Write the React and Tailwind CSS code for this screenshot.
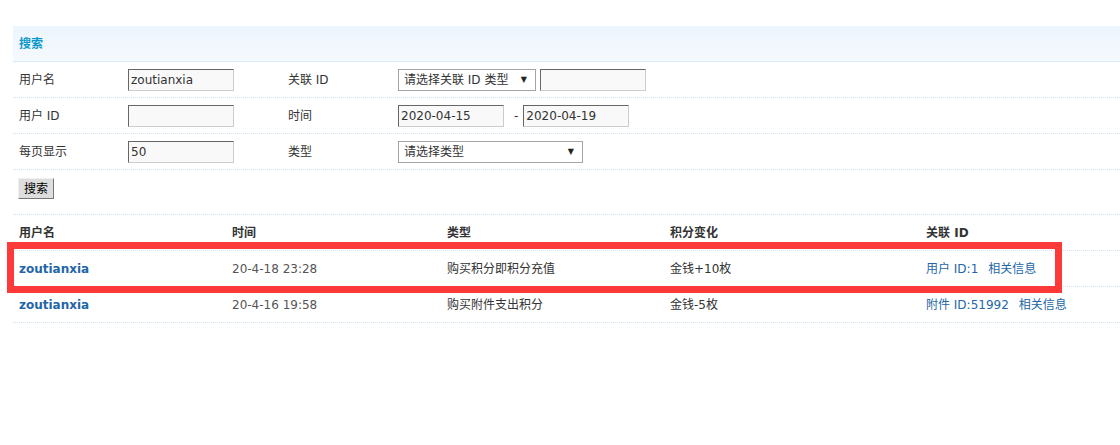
import { useState } from 'react'

const FONT = "font-['DejaVu_Sans','Noto_Sans_CJK_SC',sans-serif]"

const ROWS = [
  { user: 'zoutianxia', time: '20-4-18 23:28', type: '购买积分即积分充值', change: '金钱+10枚', rel: '用户 ID:1' },
  { user: 'zoutianxia', time: '20-4-16 19:58', type: '购买附件支出积分', change: '金钱-5枚', rel: '附件 ID:51992' },
]

function TextBox({ value = '', className = '' }) {
  return (
    <div
      className={[
        'h-[22px] border border-t-[#666] border-l-[#666] border-b-[#ccc] border-r-[#ccc] bg-[#f9f9f9] px-[2px] leading-[20px]',
        className,
      ].join(' ')}
    >
      {value}
    </div>
  )
}

function SelectBox({ label, className = '' }) {
  return (
    <div
      className={[
        'flex h-[22px] items-center justify-between border border-[#a5a5a5] bg-white pl-[5px] pr-[8px] leading-[20px]',
        className,
      ].join(' ')}
    >
      <span>{label}</span>
      <span className="text-[8px] text-[#222]">▼</span>
    </div>
  )
}

const formRow = 'grid h-[36px] grid-cols-[115px_160px_110px_1fr] items-center border-b border-dotted border-[#cfe2f1] pt-px'
const tableRow = 'grid h-[36px] grid-cols-[213px_215px_223px_256px_1fr] items-center border-b border-dotted border-[#cfe2f1] pt-px'

export default function App() {
  const [user] = useState('zoutianxia')

  return (
    <div className={`${FONT} relative min-h-[445px] bg-white text-[12px] text-[#333]`}>
      <div className="ml-[13px] pt-[26px]">
        <div className="flex h-[36px] items-center border-b border-dotted border-[#cfe2f1] bg-gradient-to-b from-[#edf5fd] to-[#f4f9fd] pl-[6px] pt-px font-bold text-[#0b99cc]">
          搜索
        </div>

        <div className={formRow}>
          <span className="pl-[6px]">用户名</span>
          <TextBox value={user} className="w-[106px]" />
          <span>关联 ID</span>
          <div className="flex items-center gap-[4px]">
            <SelectBox label="请选择关联 ID 类型" className="w-[138px]" />
            <TextBox className="w-[106px]" />
          </div>
        </div>

        <div className={formRow}>
          <span className="pl-[6px]">用户 ID</span>
          <TextBox className="w-[106px]" />
          <span>时间</span>
          <div className="flex items-center">
            <TextBox value="2020-04-15" className="w-[106px]" />
            <span className="ml-[10px] mr-[5px]">-</span>
            <TextBox value="2020-04-19" className="w-[106px]" />
          </div>
        </div>

        <div className={formRow}>
          <span className="pl-[6px]">每页显示</span>
          <TextBox value="50" className="w-[106px]" />
          <span>类型</span>
          <SelectBox label="请选择类型" className="w-[185px]" />
        </div>

        <div className="h-[45px] border-b border-dotted border-[#cfe2f1] pl-[5px] pt-[8px]">
          <button className="h-[21px] w-[36px] border border-t-[#f0f0f0] border-l-[#f0f0f0] border-b-[#777] border-r-[#777] bg-[#dddddd] text-[12px] leading-[18px] text-black">
            搜索
          </button>
        </div>

        <div className={`${tableRow} font-bold`}>
          <span className="pl-[6px]">用户名</span>
          <span className="pl-[6px]">时间</span>
          <span className="pl-[6px]">类型</span>
          <span className="pl-[6px]">积分变化</span>
          <span className="pl-[6px]">关联 ID</span>
        </div>

        {ROWS.map((r, i) => (
          <div key={i} className={tableRow}>
            <a className="pl-[6px] font-bold text-[#2366a8]">{r.user}</a>
            <span className="pl-[6px] text-[#555]">{r.time}</span>
            <span className="pl-[6px]">{r.type}</span>
            <span className="pl-[6px]">{r.change}</span>
            <span className="flex gap-[10px] pl-[6px] text-[#2366a8]">
              <a>{r.rel}</a>
              <a>相关信息</a>
            </span>
          </div>
        ))}
      </div>

      {/* red highlight drawn over the first result row */}
      <div className="pointer-events-none absolute left-[7px] top-[242px] h-[51px] w-[1055px] border-[7px] border-[#fd3a3a]" />
    </div>
  )
}
